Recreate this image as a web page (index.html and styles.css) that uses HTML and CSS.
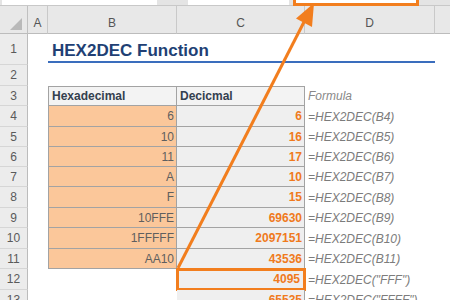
FILE: index.html
```html
<!DOCTYPE html>
<html>
<head>
<meta charset="utf-8">
<link rel="stylesheet" href="styles.css">
</head>
<body>
<div class="page">
  <div class="fbar">
    <div class="fbox fbox-name"></div>
    <div class="fgap"></div>
    <div class="fbox fbox-mid"></div>
    <div class="fgap fgap-small"></div>
    <div class="fbox fbox-hl"></div>
    <div class="fgap"></div>
  </div>
  <div class="sheet">
    <div class="ch corner"><span class="tri"></span></div>
    <div class="ch">A</div>
    <div class="ch">B</div>
    <div class="ch">C</div>
    <div class="ch">D</div>
    <div class="ch ch-last"></div>

    <div class="rh">1</div>
    <div class="c"></div>
    <div class="c title-cell"><span class="title">HEX2DEC Function</span></div>
    <div class="c title-line"></div>
    <div class="c title-line"></div>
    <div class="c"></div>

    <div class="rh">2</div>
    <div class="c"></div><div class="c"></div><div class="c"></div><div class="c"></div><div class="c"></div>

    <div class="rh">3</div>
    <div class="c"></div>
    <div class="c tb tb-b tb-top th">Hexadecimal</div>
    <div class="c tb tb-top th">Decicmal</div>
    <div class="c f fh">Formula</div>
    <div class="c"></div>

    <div class="rh">4</div>
    <div class="c"></div>
    <div class="c tb tb-b hx">6</div>
    <div class="c tb dc">6</div>
    <div class="c f">=HEX2DEC(B4)</div>
    <div class="c"></div>

    <div class="rh">5</div>
    <div class="c"></div>
    <div class="c tb tb-b hx">10</div>
    <div class="c tb dc">16</div>
    <div class="c f">=HEX2DEC(B5)</div>
    <div class="c"></div>

    <div class="rh">6</div>
    <div class="c"></div>
    <div class="c tb tb-b hx">11</div>
    <div class="c tb dc">17</div>
    <div class="c f">=HEX2DEC(B6)</div>
    <div class="c"></div>

    <div class="rh">7</div>
    <div class="c"></div>
    <div class="c tb tb-b hx">A</div>
    <div class="c tb dc">10</div>
    <div class="c f">=HEX2DEC(B7)</div>
    <div class="c"></div>

    <div class="rh">8</div>
    <div class="c"></div>
    <div class="c tb tb-b hx">F</div>
    <div class="c tb dc">15</div>
    <div class="c f">=HEX2DEC(B8)</div>
    <div class="c"></div>

    <div class="rh">9</div>
    <div class="c"></div>
    <div class="c tb tb-b hx">10FFE</div>
    <div class="c tb dc">69630</div>
    <div class="c f">=HEX2DEC(B9)</div>
    <div class="c"></div>

    <div class="rh">10</div>
    <div class="c"></div>
    <div class="c tb tb-b hx">1FFFFF</div>
    <div class="c tb dc">2097151</div>
    <div class="c f">=HEX2DEC(B10)</div>
    <div class="c"></div>

    <div class="rh">11</div>
    <div class="c"></div>
    <div class="c tb tb-b hx">AA10</div>
    <div class="c tb dc">43536</div>
    <div class="c f">=HEX2DEC(B11)</div>
    <div class="c"></div>

    <div class="rh">12</div>
    <div class="c"></div>
    <div class="c"></div>
    <div class="c tb dc hl">4095</div>
    <div class="c f">=HEX2DEC("FFF")</div>
    <div class="c"></div>

    <div class="rh">13</div>
    <div class="c"></div>
    <div class="c"></div>
    <div class="c tb dc">65535</div>
    <div class="c f">=HEX2DEC("FFFF")</div>
    <div class="c"></div>
  </div>
  <svg class="arrow" width="450" height="300" viewBox="0 0 450 300">
    <line x1="178" y1="268" x2="304" y2="22" stroke="#f27e1e" stroke-width="3"/>
    <polygon points="314,3 312,27 296,18.5" fill="#f27e1e"/>
  </svg>
</div>
</body>
</html>
```

FILE: styles.css
```css
* { box-sizing: border-box; }
html, body { margin: 0; padding: 0; background: #fff; }
body {
  width: 450px;
  height: 300px;
  overflow: hidden;
  font-family: "Liberation Sans", Arial, sans-serif;
}
.page { position: relative; width: 450px; height: 300px; overflow: hidden; }

.fbar {
  display: flex;
  height: 6px;
  background: #e4e4e4;
  border-bottom: 1px solid #c8c8c8;
}
.fbox { background: #fff; height: 5px; }
.fbox-name { width: 167px; margin-left: 2px; }
.fgap { width: 33px; }
.fgap-small { width: 5px; }
.fbox-mid { width: 108px; }
.fbox-hl {
  width: 135px;
  height: 9px;
  margin-top: -3px;
  border: 3px solid #f27e1e;
}

.sheet {
  display: grid;
  grid-template-columns: 28px 20px 129px 128px 130px 1fr;
  grid-template-rows: 28px 31px 21px 20px 21px 20px 20px 20px 21px 20px 21px 20px 21px 20px;
  font-size: 12px;
}

.ch {
  background: #e8e8e8;
  border-right: 1px solid #c9c9c9;
  border-bottom: 1px solid #bcbcbc;
  color: #555;
  display: flex;
  align-items: flex-end;
  justify-content: center;
  padding-bottom: 3px;
  font-size: 12px;
}
.ch-last { border-right: none; }
.corner { position: relative; border-right: 1px solid #c0c0c0; }
.tri {
  position: absolute;
  right: 5px;
  bottom: 3px;
  width: 0;
  height: 0;
  border-left: 12px solid transparent;
  border-bottom: 12px solid #b9b9b9;
}

.rh {
  background: #ececec;
  border-right: 1px solid #bcbcbc;
  border-bottom: 1px solid #d6d6d6;
  color: #5a5a5a;
  display: flex;
  align-items: center;
  justify-content: center;
  font-size: 12px;
}

.c {
  display: flex;
  align-items: center;
  white-space: nowrap;
  overflow: visible;
  min-width: 0;
}

.title-cell {
  border-bottom: 2px solid #3a6dbd;
  margin-bottom: 2px;
  overflow: visible;
  position: relative;
  z-index: 1;
}
.title {
  font-weight: bold;
  font-size: 17px;
  color: #213f74;
  padding-left: 4px;
  padding-top: 6px;
}
.title-line {
  border-bottom: 2px solid #3a6dbd;
  margin-bottom: 2px;
}
.sheet > .title-line:nth-child(10) { margin-right: 0; }

.tb {
  border-right: 1px solid #a3a3a3;
  border-bottom: 1px solid #a3a3a3;
  background: #efefef;
  justify-content: flex-end;
  padding-right: 2px;
}
.tb-b { border-left: 1px solid #a3a3a3; }
.tb-top { border-top: 1px solid #a3a3a3; }

.th {
  justify-content: flex-start;
  padding-left: 3px;
  font-weight: bold;
  color: #34404f;
  background: #f3f3f3;
}

.hx {
  background: #fbc79a;
  color: #5f5f5f;
}

.dc {
  color: #f07a1c;
  font-weight: bold;
}

.hl {
  outline: 3px solid #f27e1e;
  outline-offset: -2px;
  padding-right: 4px;
}

.f {
  font-style: italic;
  color: #7c7c7c;
  padding-left: 3px;
}
.fh { color: #888; }

.arrow {
  position: absolute;
  left: 0;
  top: 0;
  pointer-events: none;
}
```
